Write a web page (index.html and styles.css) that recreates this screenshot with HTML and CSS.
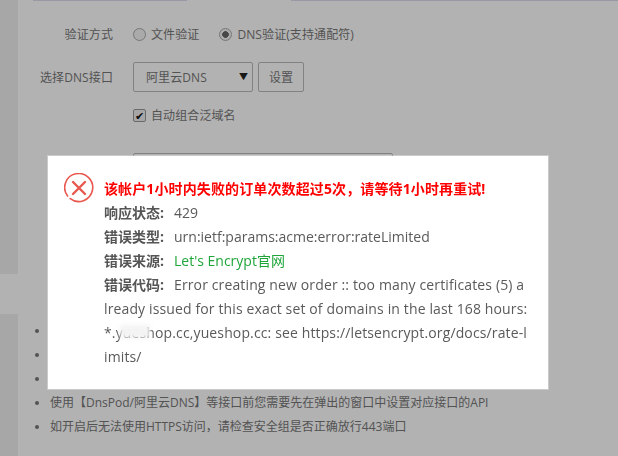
FILE: index.html
```html
<!DOCTYPE html>
<html>
<head>
  <meta name="viewport" content="width=device-width, initial-scale=1.0">
  <link rel="stylesheet" href="styles.css">
</head>
<body>
  <div class="layout">
    <div class="side">
      <div class="side-top"></div>
      <div class="side-bottom"></div>
    </div>
    <div class="main">
      <div class="tab-line">
        <div class="tab-rule tab-rule-left"></div>
        <div class="tab-rule tab-rule-right"></div>
      </div>

      <div class="form">
        <div class="form-row row-verify">
          <div class="form-label">验证方式</div>
          <div class="form-controls">
            <span class="radio"></span>
            <span class="radio-text">文件验证</span>
            <span class="radio checked"></span>
            <span class="radio-text">DNS验证(支持通配符)</span>
          </div>
        </div>
        <div class="form-row row-dns">
          <div class="form-label">选择DNS接口</div>
          <div class="form-controls">
            <div class="select">
              <span>阿里云DNS</span>
              <span class="select-arrow">▼</span>
            </div>
            <button class="btn">设置</button>
          </div>
        </div>
        <div class="form-row row-auto">
          <div class="form-label"></div>
          <div class="form-controls">
            <span class="checkbox">✔</span>
            <span class="checkbox-text">自动组合泛域名</span>
          </div>
        </div>
        <div class="form-row row-input">
          <div class="form-label"></div>
          <div class="text-input"></div>
        </div>
      </div>

      <ul class="tips">
        <li>&nbsp;</li>
        <li>&nbsp;</li>
        <li>&nbsp;</li>
        <li>使用【DnsPod/阿里云DNS】等接口前您需要先在弹出的窗口中设置对应接口的API</li>
        <li>如开启后无法使用HTTPS访问，请检查安全组是否正确放行443端口</li>
      </ul>
    </div>
  </div>

  <div class="mask"></div>

  <div class="dialog">
    <svg class="dialog-icon" width="30" height="30" viewBox="0 0 30 30">
      <path d="M6.2 25.6A14 14 0 1 0 3.6 23" fill="none" stroke="#e9584e" stroke-width="1.6" stroke-linecap="round"/>
      <path d="M9 9L21 21M21 9L9 21" fill="none" stroke="#e9584e" stroke-width="2.4" stroke-linecap="round"/>
    </svg>
    <div class="dialog-body">
      <div class="dialog-title">该帐户1小时内失败的订单次数超过5次，请等待1小时再重试!</div>
      <div><b>响应状态:</b>429</div>
      <div><b>错误类型:</b>urn:ietf:params:acme:error:rateLimited</div>
      <div><b>错误来源:</b><a class="link">Let's Encrypt官网</a></div>
      <div class="error-text"><b>错误代码:</b>Error creating new order :: too many certificates (5) a<br>lready issued for this exact set of domains in the last 168 hours:<br>*.yueshop.cc,yueshop.cc: see https://letsencrypt.org/docs/rate-l<br>imits/<span class="smudge"></span></div>
    </div>
  </div>
</body>
</html>
```

FILE: styles.css
```css
* {
  box-sizing: border-box;
}
body {
  margin: 0;
  height: 456px;
  overflow: hidden;
  background: #fff;
  color: #777;
  font-family: "Open Sans", "Noto Sans CJK SC", sans-serif;
  font-size: 12px;
}
.layout {
  display: flex;
  height: 456px;
}
.side {
  width: 18px;
  flex-shrink: 0;
}
.side-top {
  height: 274px;
  background: #f0f0f0;
}
.side-bottom {
  height: 142px;
  margin-top: 40px;
  background: #f0f0f0;
}
.main {
  flex: 1;
}
.tab-line {
  display: flex;
  height: 1px;
}
.tab-rule {
  background: #dcdcec;
}
.tab-rule-left {
  width: 154px;
  margin-left: 15px;
}
.tab-rule-right {
  flex: 1;
  margin-left: 104px;
}

/* form */
.form {
  padding-top: 21px;
  letter-spacing: 0.1px;
}
.form-row {
  display: flex;
  align-items: center;
}
.form-label {
  width: 95px;
  margin-right: 20px;
  text-align: right;
  flex-shrink: 0;
}
.form-controls {
  display: flex;
  align-items: center;
}
.row-verify {
  height: 24px;
}
.row-dns {
  height: 29px;
  margin-top: 16px;
}
.row-auto {
  height: 24px;
  margin-top: 12px;
}
.row-input {
  height: 30px;
  margin-top: 26px;
}
.radio {
  width: 13px;
  height: 13px;
  border: 1px solid #aaa;
  border-radius: 50%;
  background: #f4f4f4;
}
.radio.checked {
  background: radial-gradient(circle, #666 0 3px, #f4f4f4 3.6px);
}
.radio-text {
  margin: 0 20px 0 5px;
}
.select {
  display: flex;
  align-items: center;
  justify-content: space-between;
  width: 120px;
  height: 30px;
  padding: 0 4px 0 12px;
  border: 1px solid #bbb;
  border-radius: 2px;
}
.select-arrow {
  color: #222;
  font-size: 9px;
}
.btn {
  height: 30px;
  width: 46px;
  margin-left: 5px;
  padding: 0;
  background: #fff;
  border: 1px solid #bbb;
  border-radius: 2px;
  color: #777;
  font: inherit;
}
.checkbox {
  display: flex;
  align-items: center;
  justify-content: center;
  width: 13px;
  height: 13px;
  background: #eee;
  border: 1px solid #999;
  border-radius: 2px;
  color: #111;
  font-size: 11px;
  line-height: 1;
}
.checkbox-text {
  margin-left: 5px;
}
.text-input {
  width: 260px;
  height: 30px;
  border: 1px solid #bbb;
  border-radius: 2px;
}

/* tips */
.tips {
  margin: 136px 0 0;
  padding-left: 32px;
  line-height: 24px;
}

/* dialog */
.mask {
  position: fixed;
  top: 0;
  left: 0;
  right: 0;
  bottom: 0;
  background: rgba(0, 0, 0, 0.3);
}
.dialog {
  position: fixed;
  top: 156px;
  left: 48px;
  display: flex;
  width: 500px;
  height: 233px;
  padding: 21px 20px 0 16px;
  background: #fff;
  box-shadow: 0 0 0 1px rgba(255, 255, 255, 0.3);
  color: #5a5a5a;
  font-size: 14px;
  line-height: 24px;
}
.dialog-icon {
  flex-shrink: 0;
  margin-top: -4px;
  margin-right: 10px;
}
.dialog-body {
  flex: 1;
  white-space: nowrap;
}
.dialog-body b {
  margin-right: 10px;
  color: #555;
}
.dialog-title {
  color: #f00;
  font-weight: bold;
  letter-spacing: 0.12px;
}
.link {
  color: #20a53a;
}
.error-text {
  position: relative;
  letter-spacing: 0.13px;
}
.error-text b {
  letter-spacing: 0;
}
.smudge {
  position: absolute;
  left: 16px;
  top: 52px;
  width: 30px;
  height: 13px;
  background: #f4f4f4;
  filter: blur(2px);
}
```
